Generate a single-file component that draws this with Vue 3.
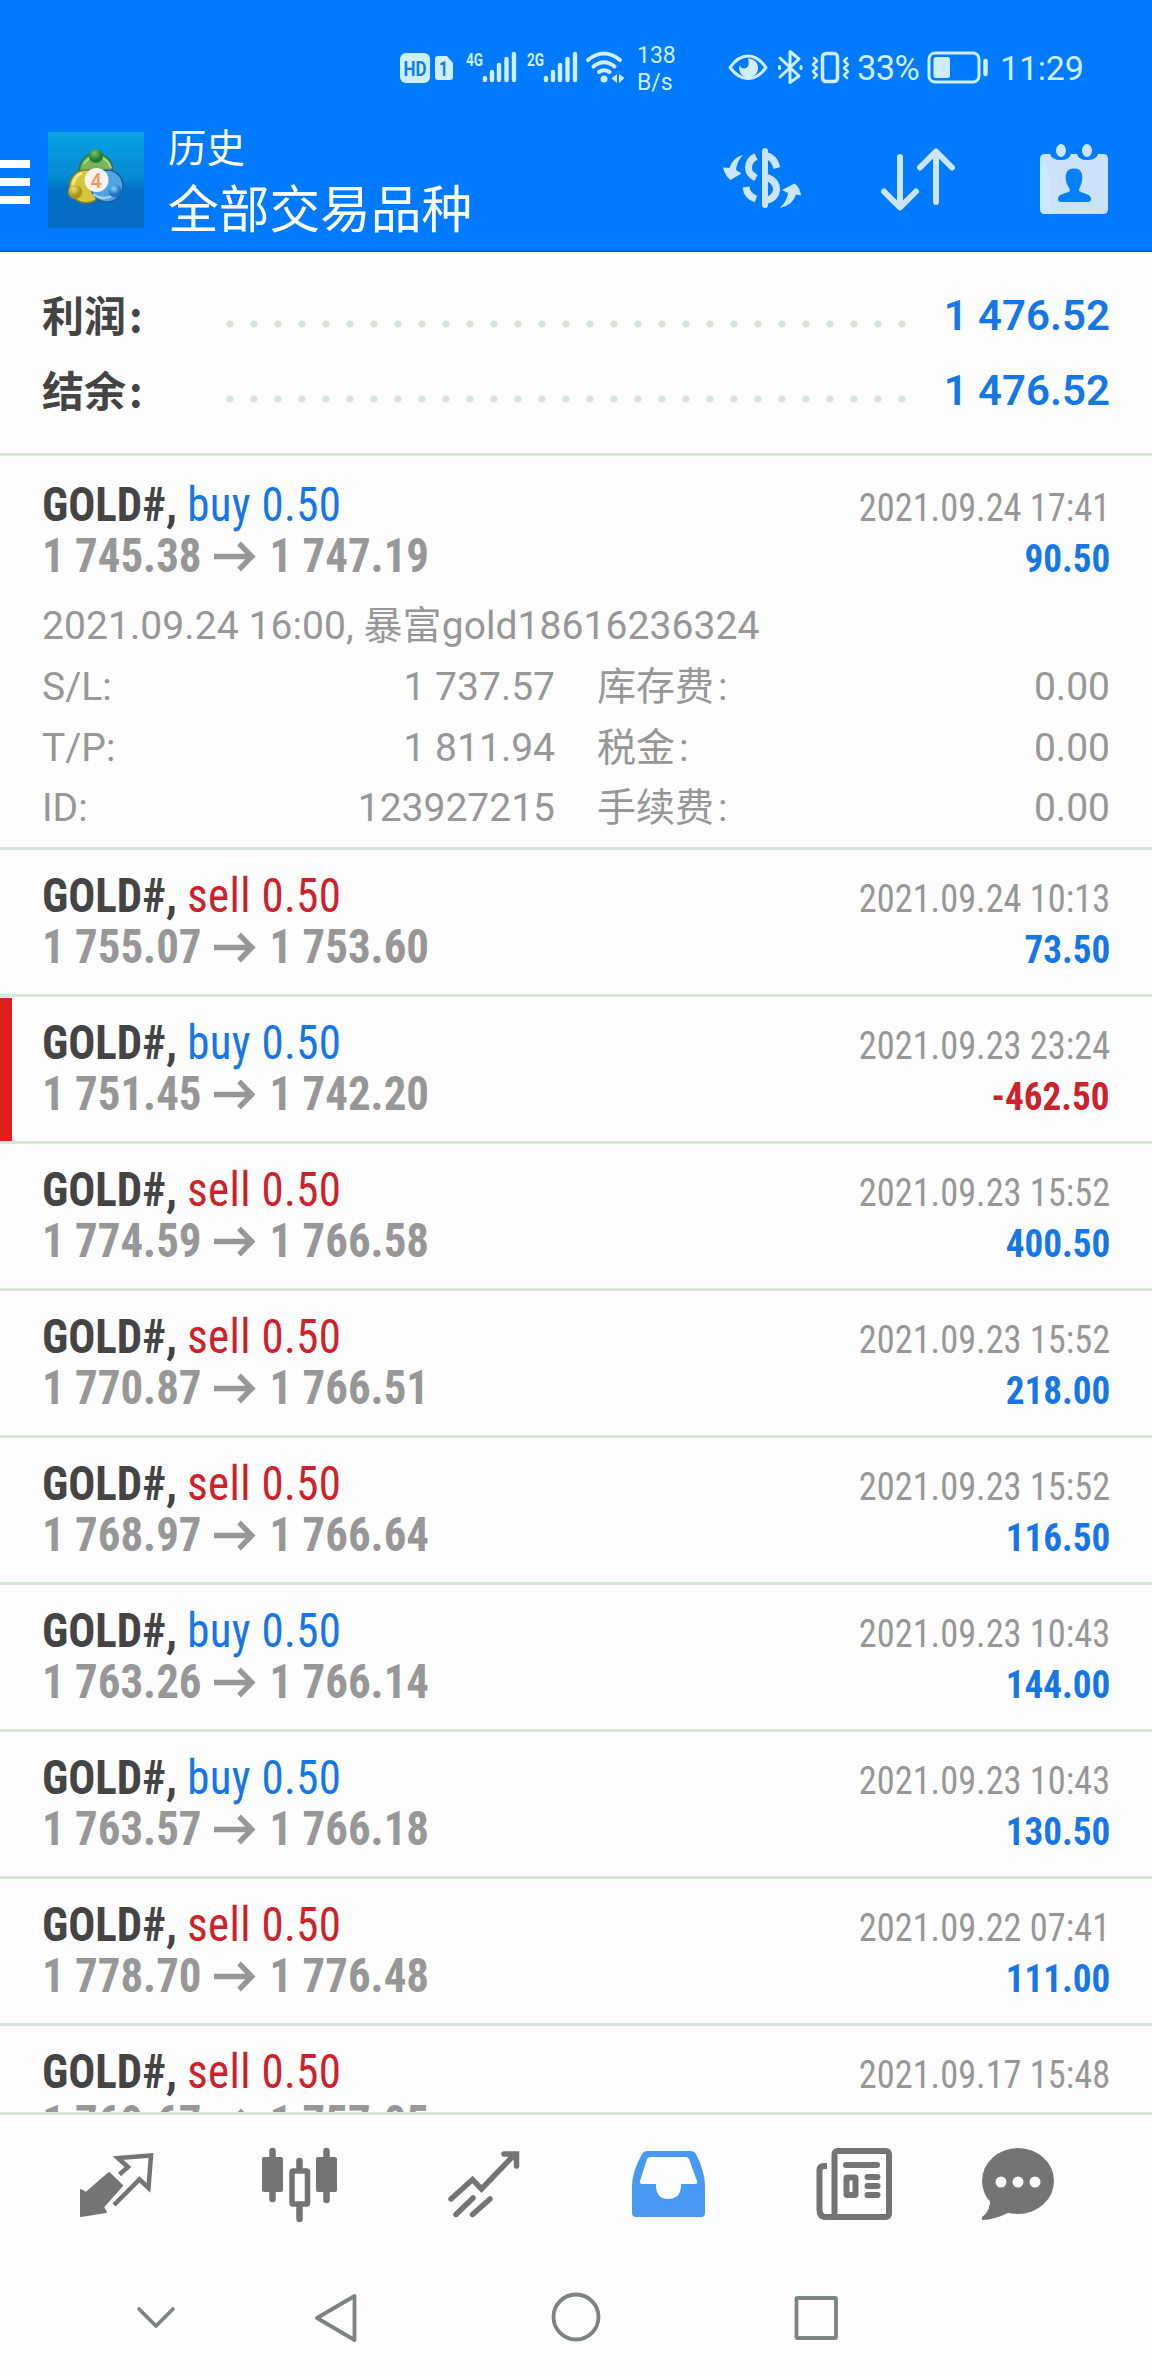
<script setup>
const trades = [
  { type: 'sell', from: '1 755.07', to: '1 753.60', time: '2021.09.24 10:13', profit: '73.50' },
  { type: 'buy', from: '1 751.45', to: '1 742.20', time: '2021.09.23 23:24', profit: '-462.50', flag: true },
  { type: 'sell', from: '1 774.59', to: '1 766.58', time: '2021.09.23 15:52', profit: '400.50' },
  { type: 'sell', from: '1 770.87', to: '1 766.51', time: '2021.09.23 15:52', profit: '218.00' },
  { type: 'sell', from: '1 768.97', to: '1 766.64', time: '2021.09.23 15:52', profit: '116.50' },
  { type: 'buy', from: '1 763.26', to: '1 766.14', time: '2021.09.23 10:43', profit: '144.00' },
  { type: 'buy', from: '1 763.57', to: '1 766.18', time: '2021.09.23 10:43', profit: '130.50' },
  { type: 'sell', from: '1 778.70', to: '1 776.48', time: '2021.09.22 07:41', profit: '111.00' },
  { type: 'sell', from: '1 769.67', to: '1 757.05', time: '2021.09.17 15:48', profit: '' },
]
const first = {
  type: 'buy', from: '1 745.38', to: '1 747.19', time: '2021.09.24 17:41', profit: '90.50', open: true,
  note: '2021.09.24 16:00, 暴富gold18616236324',
  details: [
    ['S/L:', '1 737.57', '库存费', '0.00'],
    ['T/P:', '1 811.94', '税金', '0.00'],
    ['ID:', '123927215', '手续费', '0.00'],
  ],
}
const rows = [first, ...trades]
const totals = [['利润', '1 476.52'], ['结余', '1 476.52']]
</script>

<template>
  <div class="screen">
    <header>
      <div class="status">
        <svg class="hd" width="60" height="110" viewBox="400 0 60 110">
          <rect x="400" y="53" width="30" height="30" rx="6" fill="#cfefff" />
          <text x="403.5" y="75.5" font-size="20" font-weight="700" fill="#0a7cf6" textLength="23" lengthAdjust="spacingAndGlyphs">HD</text>
          <path d="M438 56H447L453 63V77Q453 80 450 80H438Q435 80 435 77V59Q435 56 438 56Z" fill="#cfefff" />
          <text x="439" y="75.5" font-size="20" font-weight="700" fill="#0a7cf6" textLength="9" lengthAdjust="spacingAndGlyphs">1</text>
        </svg>
        <svg v-for="n in ['4G', '2G']" :key="n" width="61" height="110" viewBox="460 0 61 110">
          <text x="466" y="66" font-size="19" font-weight="700" fill="#cfefff" textLength="17" lengthAdjust="spacingAndGlyphs">{{ n }}</text>
          <path d="M485 78V80M492 72V80M499 65V80M506.500 59V80M514 54V80" stroke="#cfefff" stroke-width="4.400" stroke-linecap="round" />
        </svg>
        <svg class="wifi" width="55" height="110" viewBox="582 0 55 110" fill="none" stroke="#cfefff" stroke-width="4" stroke-linecap="round">
          <path d="M588 60Q604 47 620 60M593.500 66.500Q604 58 614.500 66.500M599 72Q604 68.500 609.500 72" />
          <circle cx="604" cy="79" r="3.500" fill="#cfefff" stroke="none" />
          <path d="M617 74V83L611.500 78.500ZM619 74V83L624.500 78Z" fill="#cfefff" stroke="none" />
        </svg>
        <div class="speed"><span>138</span><span>B/s</span></div>
        <svg width="138" height="110" viewBox="720 0 138 110" fill="none" stroke="#cfefff" stroke-width="3" stroke-linecap="round" stroke-linejoin="round">
          <path d="M730 67.500Q738 56 748 56Q758 56 766 67.500Q758 78.500 748 78.500Q738 78.500 730 67.500Z" />
          <path d="M748 58.500A9.500 9.500 0 1 1 739.500 65Q742 70 746 68Q750 66 748 58.500Z" fill="#cfefff" stroke="none" />
          <path d="M780 58L799 76L790 82.500V51.500L799 59L780 77M779.500 66.500V68.500M801 66.500V68.500" />
          <rect x="822.500" y="53.500" width="15" height="28" rx="3.500" stroke-width="3.500" />
          <path d="M814 58L817 61L813 64.500L817 68L813 71.500L817 75L814 78M847 58L844 61L848 64.500L844 68L848 71.500L844 75L847 78" stroke-width="2.500" />
        </svg>
        <span class="pct">33%</span>
        <svg width="67" height="110" viewBox="925 0 67 110" fill="none" stroke="#cfefff" stroke-width="3">
          <rect x="929" y="53" width="50" height="29" rx="6" />
          <rect x="933.500" y="57" width="16.500" height="21" rx="2.500" fill="#cfefff" stroke="none" />
          <path d="M985.500 61V74" stroke-width="4.500" stroke-linecap="round" />
        </svg>
        <span class="clock">11:29</span>
      </div>
      <div class="bar">
        <svg width="168" height="142" viewBox="0 110 168 142">
          <defs>
            <linearGradient id="sky" x1="0" y1="0" x2="0" y2="1">
              <stop offset="0" stop-color="#06a4e6" /><stop offset=".48" stop-color="#0788cf" />
              <stop offset=".6" stop-color="#026fc4" /><stop offset="1" stop-color="#056bc3" />
            </linearGradient>
            <radialGradient id="gr" cx=".4" cy=".3"><stop offset="0" stop-color="#7cc45e" /><stop offset="1" stop-color="#1f7d35" /></radialGradient>
            <radialGradient id="ye" cx=".4" cy=".3"><stop offset="0" stop-color="#f0e168" /><stop offset="1" stop-color="#a8921b" /></radialGradient>
            <radialGradient id="bl" cx=".4" cy=".3"><stop offset="0" stop-color="#8fd0fb" /><stop offset="1" stop-color="#1d70c4" /></radialGradient>
          </defs>
          <path d="M0 164H30M0 182H30M0 200H30" stroke="#fff" stroke-width="8" />
          <rect x="48" y="132" width="96" height="96" fill="url(#sky)" />
          <circle cx="96" cy="170" r="16.500" fill="#7bb35a" stroke="#2f7436" stroke-width="1.600" />
          <circle cx="86" cy="186.500" r="16.500" fill="#d5c53b" stroke="#7e7c2b" stroke-width="1.600" />
          <circle cx="107" cy="186" r="16" fill="#51a4e4" stroke="#1c5a9f" stroke-width="1.600" />
          <path d="M84 164A15 15 0 0 1 111 168" fill="none" stroke="#a9d78e" stroke-width="2" />
          <path d="M74 190A13 13 0 0 1 82 173" fill="none" stroke="#f3e97f" stroke-width="3" />
          <path d="M93 194Q106 204 119 190" fill="none" stroke="#99d1f8" stroke-width="2.500" />
          <circle cx="96" cy="156" r="7" fill="url(#gr)" />
          <circle cx="75" cy="192" r="7" fill="url(#ye)" />
          <circle cx="115" cy="191" r="6.500" fill="url(#bl)" />
          <circle cx="96.500" cy="180" r="12" fill="#f8f3f0" />
          <text x="90.500" y="187.500" font-size="20" font-weight="500" fill="#ee9a52">4</text>
        </svg>
        <div class="titles"><span class="sub">历史</span><span class="main">全部交易品种</span></div>
        <svg class="tools" width="462" height="142" viewBox="690 110 462 142" fill="none" stroke="#cbe6fb" stroke-width="6" stroke-linecap="round" stroke-linejoin="round">
          <path d="M765 151V205" />
          <g stroke-linecap="butt">
            <path d="M756 156.500Q748.500 160 748.500 168Q748.500 174 756 178M746 187Q747 196 756 199" stroke-width="7" />
            <path d="M766 155.500Q774 157 777 168M766 177Q777 181 776.500 190Q776 198 766 200.500" stroke-width="7" />
          </g>
          <path d="M743 155Q733 157 729.500 168L723 167.500Q725 176 730.500 180L741.500 173.500L736 170Q737 161 743 155ZM780 208Q793 205 796 194.500L801 195.500Q800 187 794.500 183.500L782 190L788 193Q787 201 780 208Z" fill="#cbe6fb" stroke="none" />
          <path d="M900 157V207M884 191.500L900 207.500L916 191.500M936 202V152M920 167.500L936 151.500L952 167.500" />
          <g stroke="none">
            <path d="M1045 154H1050Q1052 160 1061 160Q1069 160 1071 154H1077Q1079 160 1087 160Q1096 160 1098 154H1103Q1108 154 1108 159V209Q1108 214 1103 214H1045Q1040 214 1040 209V159Q1040 154 1045 154Z" fill="#cbe2f8" />
            <path d="M1040 165Q1052 156 1051 214H1045Q1040 214 1040 209Z" fill="#cceefe" opacity=".6" />
            <ellipse cx="1061" cy="150.500" rx="5" ry="6.500" fill="#cbe6fb" /><ellipse cx="1087" cy="150.500" rx="5" ry="6.500" fill="#cbe6fb" />
            <path d="M1074 168.500C1082 168.500 1083 175 1082 181C1081 186 1079 188 1079 191C1084 194 1091 194 1091 199Q1091 202 1088 202H1061Q1058 202 1058 199C1058 194 1065 194 1070 191C1070 188 1067 186 1066 181C1065 175 1066 168.500 1074 168.500Z" fill="#067ff7" />
          </g>
        </svg>
      </div>
    </header>

    <section class="totals">
      <div v-for="t in totals" :key="t[0]" class="total">
        <span class="label">{{ t[0] }}<i>:</i></span><i class="dots"></i><b>{{ t[1] }}</b>
      </div>
    </section>

    <main>
      <article v-for="(r, i) in rows" :key="i" :class="{ open: r.open, flag: r.flag }">
        <div class="line">
          <span class="cond left"><b>GOLD#,</b> <span :class="r.type">{{ r.type }} 0.50</span></span>
          <span class="cond right time">{{ r.time }}</span>
        </div>
        <div class="line prices">
          <span class="cond left pair">
            <span>{{ r.from }}</span>
            <svg width="46" height="34" viewBox="0 0 46 34" fill="none" stroke="#979797" stroke-width="5.500"><path d="M1 18.500H41M27.500 5.500L41 18.500L27.500 31.500" /></svg>
            <span>{{ r.to }}</span>
          </span>
          <span class="cond right profit" :class="{ neg: r.flag }">{{ r.profit }}</span>
        </div>
        <div v-if="r.open" class="more">
          <p>{{ r.note }}</p>
          <div v-for="d in r.details" :key="d[0]" class="detail">
            <span>{{ d[0] }}</span><span class="num">{{ d[1] }}</span>
            <span class="fee">{{ d[2] }}<i>:</i></span><span class="num">{{ d[3] }}</span>
          </div>
        </div>
      </article>
    </main>

    <nav>
      <svg width="1152" height="261" viewBox="0 2115 1152 261" fill="none" stroke="#727573" stroke-linejoin="round">
        <path d="M81 2190L86 2193L109 2173L122 2185.500L103 2207L106 2212L81 2216Z" fill="#727573" stroke-width="2" />
        <path d="M119.500 2174.500L128 2167L118 2158L151 2155.500L148.500 2188L139.500 2179.500L114 2205" stroke-width="4.500" stroke-linejoin="miter" />
        <path d="M272.500 2151V2199M326.500 2151V2200M299.500 2161V2170M299.500 2205V2219" stroke-width="6.500" stroke-linecap="round" />
        <rect x="262" y="2157" width="21" height="35" rx="2" fill="#727573" stroke="none" />
        <rect x="316" y="2157" width="21" height="35" rx="2" fill="#727573" stroke="none" />
        <rect x="292" y="2171" width="15.500" height="33" rx="1" stroke-width="5.500" />
        <path d="M451 2199L472.500 2179.500L481.500 2189L515 2154M504 2154H516.500V2166M456 2214.500L473 2198M472.500 2214.500L490 2199" stroke-width="5.500" stroke-linecap="round" stroke-linejoin="miter" />
        <path fill-rule="evenodd" fill="#4799f2" stroke="none" d="M648 2151H690Q694 2151 696 2154Q705 2172 705 2186V2213Q705 2217 701 2217H636Q632 2217 632 2213V2186Q632 2172 642 2154Q644 2151 648 2151ZM651 2157Q648 2157 647 2159L640 2181Q639.500 2184 642 2184H656V2187Q657 2199 668 2199Q680 2199 681 2187V2184H695Q698 2184 697 2181L689 2159Q688 2157 686 2157Z" />
        <g stroke-width="6">
          <rect x="834.500" y="2151" width="54.500" height="66" rx="3" />
          <path d="M827 2166H824Q819.500 2166 819.500 2171V2210Q819.500 2217 826 2217H840" />
          <path d="M846 2165H877M867.500 2177H877.500M867.500 2186H877.500M867.500 2195H877.500" stroke-linecap="round" />
          <rect x="846.500" y="2177.500" width="9" height="17.500" rx="1" />
        </g>
        <g stroke="none"><ellipse cx="1018" cy="2181" rx="36" ry="33" fill="#727573" /><path d="M990 2198Q991 2211 982 2217V2220Q994 2220 1010 2212Z" fill="#727573" /><circle v-for="x in [1001, 1018, 1035]" :key="x" :cx="x" cy="2182" r="5.500" fill="#fdfdfd" /></g>
        <g stroke="#7c8482" stroke-width="3.800" stroke-linecap="round">
          <path d="M139 2309L156 2326L173 2309" />
          <path d="M354.500 2296V2340L317 2318Z" />
          <circle cx="576" cy="2317" r="22.500" />
          <rect x="796.500" y="2298" width="39.500" height="40" rx="1" />
        </g>
      </svg>
    </nav>
  </div>
</template>

<style>
body { background: #fdfdfd; }
</style>
<style scoped>
.screen { width: 1152px; height: 2376px; overflow: hidden; display: flex; flex-direction: column; background: #fdfdfd; color: #979797; font-family: Roboto, "Noto Sans CJK SC", sans-serif; }
svg { display: block; flex: none; }
header { height: 252px; flex: none; background: #007aff; box-shadow: inset 0 -3px 2px -1px #0268d6; }
.status { display: flex; height: 110px; padding-left: 400px; color: #cfefff; }
.speed { display: flex; flex-direction: column; width: 83px; padding-top: 42px; font-size: 23px; line-height: 27px; }
.pct { width: 67px; font-size: 34.500px; line-height: 137px; white-space: nowrap; letter-spacing: -.6px; text-indent: -1px; }
.clock { padding-left: 8px; font-size: 34px; line-height: 137px; letter-spacing: -.2px; }
.bar { display: flex; height: 142px; color: #fff; }
.titles { display: flex; flex-direction: column; width: 522px; font-family: "Noto Sans CJK SC", sans-serif; }
.sub { font-size: 38.500px; line-height: 50px; padding-top: 10px; }
.main { font-size: 50.700px; line-height: 60px; padding-top: 6px; }
.totals { height: 204px; flex: none; box-sizing: border-box; padding: 26px 42px 0; border-bottom: 3px solid #d8e6da; }
.total { display: flex; align-items: center; height: 75px; font-size: 42px; line-height: 75px; }
.label { width: 176px; margin-top: -5px; color: #444; font-weight: 700; font-family: "Noto Sans CJK SC", sans-serif; }
.label i { font-style: normal; margin-left: 3px; }
.dots { width: 696px; height: 8px; margin-top: 16px; background: radial-gradient(circle at 12px 4px, #d8e6da 3.200px, transparent 4px) 0 0 / 24px 8px; }
.total b { margin-left: auto; color: #1577e6; font-weight: 600; }
main { height: 1656px; flex: none; overflow: hidden; }
article { height: 147px; box-sizing: border-box; padding: 21px 42px 0; border-bottom: 3px solid #d8e6da; }
article.open { height: 394px; padding-top: 24px; }
article.flag { background: linear-gradient(#e01e1e, #e01e1e) 0 1px / 12px 143px no-repeat; }
.line { display: flex; justify-content: space-between; align-items: baseline; font-size: 47.500px; line-height: 51px; height: 51px; white-space: nowrap; }
.cond { font-family: "Roboto Condensed", Roboto, sans-serif; font-stretch: 75%; }
.left { transform: scaleX(.945); transform-origin: 0 0; }
.right { transform-origin: 100% 0; }
.left b { color: #444; }
.buy { color: #1577e6; letter-spacing: .4px; }
.sell { color: #cc2229; letter-spacing: .4px; }
.time { font-size: 39.500px; transform: scaleX(.92); }
.pair { display: flex; align-items: baseline; font-weight: 700; }
.pair svg { margin: 0 14px 0 12px; }
.profit { font-size: 39.500px; font-weight: 700; color: #1577e6; transform: scaleX(.94); }
.profit.neg { color: #cc2229; }
.more { font-size: 39px; }
.more p { margin: 14px 0 0; line-height: 61px; letter-spacing: .08px; }
.detail { display: grid; grid-template-columns: 200px 313px 242px 313px; line-height: 60.700px; }
.detail .num { text-align: right; }
.fee { padding-left: 42px; }
.fee i { font-style: normal; margin-left: 4px; }
nav { height: 264px; box-sizing: border-box; border-top: 3px solid #d8e6da; }
</style>
